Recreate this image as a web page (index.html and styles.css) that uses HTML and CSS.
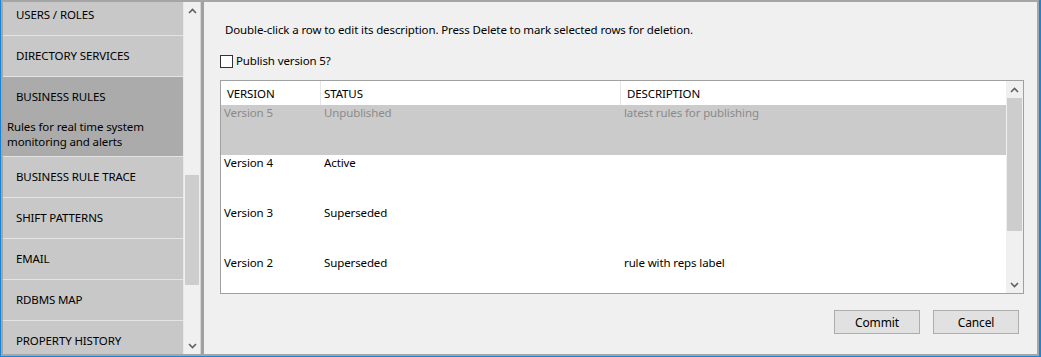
FILE: index.html
```html
<!DOCTYPE html>
<html lang="en">
<head>
    <meta charset="UTF-8">
    <title>Business Rules</title>
    <link rel="stylesheet" href="styles.css">
</head>
<body>
    <div class="window">
        <div class="frame">
            <div class="nav-pane">
                <div class="nav-list">
                    <div class="nav-items">
                        <div class="nav-item"><span class="nav-title">USERS / ROLES</span></div>
                        <div class="nav-item"><span class="nav-title">DIRECTORY SERVICES</span></div>
                        <div class="nav-item selected">
                            <span class="nav-title">BUSINESS RULES</span>
                            <p class="nav-desc">Rules for real time system monitoring and alerts</p>
                        </div>
                        <div class="nav-item"><span class="nav-title">BUSINESS RULE TRACE</span></div>
                        <div class="nav-item"><span class="nav-title">SHIFT PATTERNS</span></div>
                        <div class="nav-item"><span class="nav-title">EMAIL</span></div>
                        <div class="nav-item"><span class="nav-title">RDBMS MAP</span></div>
                        <div class="nav-item"><span class="nav-title">PROPERTY HISTORY</span></div>
                    </div>
                </div>
                <div class="scrollbar nav-scroll">
                    <div class="scroll-btn">
                        <svg width="9" height="6" viewBox="0 0 9 6"><path d="M1 5 L4.5 1.5 L8 5" fill="none" stroke="#606060" stroke-width="1.6"/></svg>
                    </div>
                    <div class="scroll-track">
                        <div class="scroll-thumb nav-thumb"></div>
                    </div>
                    <div class="scroll-btn">
                        <svg width="9" height="6" viewBox="0 0 9 6"><path d="M1 1 L4.5 4.5 L8 1" fill="none" stroke="#606060" stroke-width="1.6"/></svg>
                    </div>
                </div>
            </div>

            <div class="splitter"></div>

            <div class="content">
                <p class="hint">Double-click a row to edit its description. Press Delete to mark selected rows for deletion.</p>
                <label class="check-row">
                    <span class="checkbox"></span>
                    <span>Publish version 5?</span>
                </label>

                <div class="grid">
                    <div class="grid-table">
                        <div class="grid-head">
                            <div class="cell col-version">VERSION</div>
                            <div class="cell col-status">STATUS</div>
                            <div class="cell col-desc">DESCRIPTION</div>
                        </div>
                        <div class="grid-row selected">
                            <div class="cell col-version">Version 5</div>
                            <div class="cell col-status">Unpublished</div>
                            <div class="cell col-desc">latest rules for publishing</div>
                        </div>
                        <div class="grid-row">
                            <div class="cell col-version">Version 4</div>
                            <div class="cell col-status">Active</div>
                            <div class="cell col-desc"></div>
                        </div>
                        <div class="grid-row">
                            <div class="cell col-version">Version 3</div>
                            <div class="cell col-status">Superseded</div>
                            <div class="cell col-desc"></div>
                        </div>
                        <div class="grid-row">
                            <div class="cell col-version">Version 2</div>
                            <div class="cell col-status">Superseded</div>
                            <div class="cell col-desc">rule with reps label</div>
                        </div>
                    </div>
                    <div class="scrollbar grid-scroll">
                        <div class="scroll-btn">
                            <svg width="9" height="6" viewBox="0 0 9 6"><path d="M1 5 L4.5 1.5 L8 5" fill="none" stroke="#606060" stroke-width="1.6"/></svg>
                        </div>
                        <div class="scroll-track">
                            <div class="scroll-thumb grid-thumb"></div>
                        </div>
                        <div class="scroll-btn">
                            <svg width="9" height="6" viewBox="0 0 9 6"><path d="M1 1 L4.5 4.5 L8 1" fill="none" stroke="#606060" stroke-width="1.6"/></svg>
                        </div>
                    </div>
                </div>

                <div class="actions">
                    <button class="btn">Commit</button>
                    <button class="btn">Cancel</button>
                </div>
            </div>
        </div>
    </div>
</body>
</html>
```

FILE: styles.css
```css
* {
    box-sizing: border-box;
}
body {
    margin: 0;
    font-family: "Segoe UI", "Noto Sans", sans-serif;
    font-size: 11.5px;
    letter-spacing: -0.12px;
    color: #000;
    background: #1883d7;
}
.window {
    height: 357px;
    border-left: 1px solid #1883d7;
    border-right: 2px solid #1883d7;
    border-bottom: 1px solid #1883d7;
}
.frame {
    display: flex;
    height: 100%;
    border: 2px solid #a5a5a5;
    background: #f0f0f0;
}

/* left navigation */
.nav-pane {
    display: flex;
    width: 198px;
    flex-shrink: 0;
    border-right: 1px solid #d4d4d4;
}
.nav-list {
    width: 180px;
    overflow: hidden;
    background: #c8c8c8;
}
.nav-items {
    margin-top: -7px;
}
.nav-item {
    border-bottom: 1px solid #e4e4e4;
    background: #c8c8c8;
}
.nav-item.selected {
    background: #ababab;
}
.nav-title {
    display: flex;
    align-items: center;
    height: 40px;
    padding-left: 13px;
    padding-bottom: 1px;
}
.nav-desc {
    margin: 0;
    padding: 2px 4px 7px 4px;
    line-height: 15px;
}

/* scrollbars */
.scrollbar {
    display: flex;
    flex-direction: column;
    width: 17px;
    background: #f0f0f0;
}
.nav-scroll {
    border-left: 1px solid #e8e8e8;
}
.scroll-btn {
    display: flex;
    align-items: center;
    justify-content: center;
    height: 17px;
}
.scroll-track {
    flex: 1;
    padding: 0 1px;
}
.scroll-thumb {
    background: #cdcdcd;
}
.nav-thumb {
    margin-top: 156px;
    height: 110px;
}
.grid-thumb {
    height: 133px;
}

.splitter {
    width: 3px;
    flex-shrink: 0;
    background: #a0a0a0;
}

/* right content */
.content {
    flex: 1;
    padding: 0 13px 0 16px;
}
.hint {
    margin: 20px 0 0 5px;
    line-height: 16px;
}
.check-row {
    display: flex;
    align-items: center;
    gap: 3px;
    margin-top: 15px;
    line-height: 16px;
}
.checkbox {
    width: 13px;
    height: 13px;
    border: 1px solid #333;
    background: #fff;
}

.grid {
    display: flex;
    height: 214px;
    margin-top: 11px;
    border: 1px solid #a0a0a0;
    background: #fff;
}
.grid-table {
    flex: 1;
    overflow: hidden;
}
.grid-head,
.grid-row {
    display: flex;
}
.grid-head {
    height: 24px;
    align-items: center;
}
.grid-head .cell {
    padding-left: 6px;
}
.grid-head .col-version,
.grid-head .col-status {
    border-right: 1px solid #e5e5e5;
    height: 100%;
    display: flex;
    align-items: center;
}
.grid-head .col-status {
    padding-left: 3px;
}
.grid-row {
    height: 50px;
    line-height: 16px;
}
.grid-row .cell {
    padding-left: 3px;
}
.grid-row.selected {
    background: #cbcbcb;
    color: #8a8a8a;
}
.col-version {
    width: 100px;
}
.col-status {
    width: 300px;
}
.col-desc {
    flex: 1;
}
.grid-scroll {
    flex-shrink: 0;
}

.actions {
    display: flex;
    justify-content: flex-end;
    gap: 13px;
    margin-top: 16px;
    padding-right: 5px;
}
.btn {
    width: 86px;
    height: 24px;
    font-family: inherit;
    font-size: 12px;
    letter-spacing: -0.12px;
    color: #000;
    background: #e1e1e1;
    border: 1px solid #adadad;
}
```
